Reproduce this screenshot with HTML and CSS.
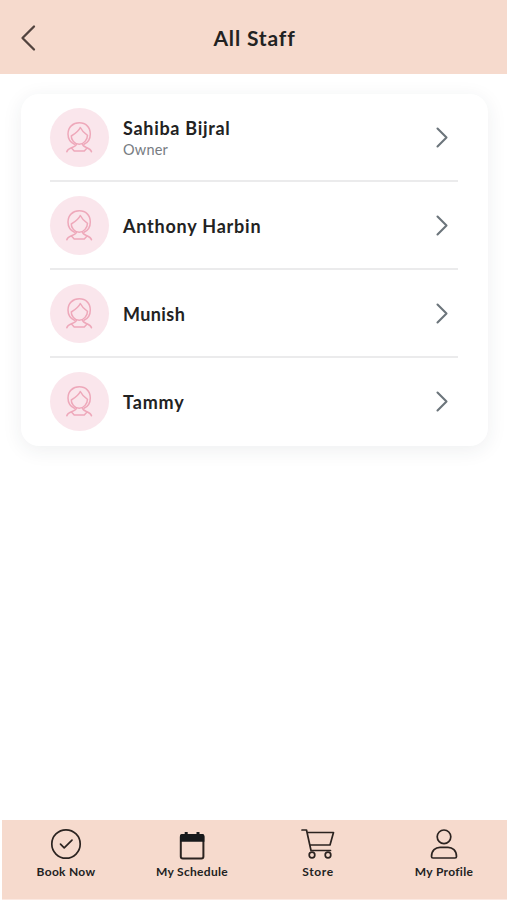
FILE: index.html
```html
<!DOCTYPE html>
<html lang="en">
<head>
<meta charset="utf-8">
<title>All Staff</title>
<link rel="stylesheet" href="styles.css">
</head>
<body>
<svg width="0" height="0" class="sprite" aria-hidden="true">
  <symbol id="person" viewBox="0 0 59 59">
    <path d="M24.500 36.300C20.500 34.500 18 31 18 26C18 19.300 22.800 14.800 29.300 14.800C35.800 14.800 40.300 19.300 40.300 26C40.300 31 38 34.500 34 36.300"/>
    <path d="M30.300 19.500C28.500 23.500 25.500 25.500 21.300 28C21 31.500 24.500 36.300 29.200 36.300C33.800 36.300 37.500 31.500 37.500 27.300C34.500 25.500 32 23 30.300 19.500Z"/>
    <path d="M26.500 36C26 38 24.500 38.600 21.500 39.800C18.500 41 17.300 41.800 16.800 43.800M32.300 36C32.800 38 34.300 38.600 37 39.800C39.800 41 41 41.800 41.500 43.800M21.500 40L24.200 43H34.300L37 40"/>
  </symbol>
  <symbol id="chevron" viewBox="0 0 14 22"><path d="M2.500 1.500L11.500 10.500L2.500 19.500"/></symbol>
</svg>
<header class="header">
  <svg class="back" viewBox="0 0 16 28"><path d="M14 2.500L2.500 14L14 25.500"/></svg>
  <h1>All Staff</h1>
</header>
<main>
  <ul class="card">
    <li class="row">
      <span class="avatar"><svg><use href="#person"/></svg></span>
      <div class="info"><div class="name sahiba">Sahiba Bijral</div><div class="role">Owner</div></div>
      <svg class="chevron"><use href="#chevron"/></svg>
    </li>
    <li class="row">
      <span class="avatar"><svg><use href="#person"/></svg></span>
      <div class="info"><div class="name anthony">Anthony Harbin</div></div>
      <svg class="chevron"><use href="#chevron"/></svg>
    </li>
    <li class="row">
      <span class="avatar"><svg><use href="#person"/></svg></span>
      <div class="info"><div class="name munish">Munish</div></div>
      <svg class="chevron"><use href="#chevron"/></svg>
    </li>
    <li class="row">
      <span class="avatar"><svg><use href="#person"/></svg></span>
      <div class="info"><div class="name tammy">Tammy</div></div>
      <svg class="chevron"><use href="#chevron"/></svg>
    </li>
  </ul>
</main>
<nav class="tabs">
  <a class="tab"><svg viewBox="0 0 36 34"><circle cx="18" cy="17" r="14.200"/><path d="M12.500 17.200L16.200 20.800L24 13.200"/></svg><span>Book Now</span></a>
  <a class="tab"><svg viewBox="0 0 36 34"><rect x="6.800" y="8" width="22.600" height="23.600" rx="2" stroke-width="2"/><path class="solid" d="M6 14.800V9Q6 7 8 7H10.700V5H13.700V7H22.500V5H25.500V7H28.400Q30.400 7 30.400 9V14.800Z"/></svg><span>My Schedule</span></a>
  <a class="tab"><svg viewBox="0 0 36 34"><path d="M2 3H6.500L11 23.500H30.500M7.300 5.500H33.500L30 18H10.300"/><circle cx="12" cy="28" r="2.800"/><circle cx="28" cy="28" r="2.800"/></svg><span class="store">Store</span></a>
  <a class="tab"><svg viewBox="0 0 36 34"><circle cx="18" cy="9.800" r="6.800"/><path d="M5.500 29.500C5.500 23.500 9.500 20.300 14 20.300H22C26.500 20.300 30.500 23.500 30.500 29.500Q30.500 31 29 31H7Q5.500 31 5.500 29.500Z"/></svg><span>My Profile</span></a>
</nav>
</body>
</html>
```
FILE: styles.css
```css
* { box-sizing: border-box; }
body {
  margin: 0;
  height: 900px;
  display: flex;
  flex-direction: column;
  overflow: hidden;
  background: #fff;
  color: #222;
  font-family: Lato, "Open Sans", sans-serif;
}
svg { fill: none; stroke-linecap: round; stroke-linejoin: round; }
.sprite { position: absolute; }
.header {
  height: 74px;
  flex: none;
  display: grid;
  grid-template-columns: 60px 1fr 60px;
  align-items: center;
  padding-top: 1px;
  background: #f6dacd;
}
.back {
  width: 16px;
  height: 28px;
  margin-left: 20px;
  stroke: #51433e;
  stroke-width: 2.3;
}
h1 {
  margin: 0 0 0 2px;
  text-align: center;
  font-size: 21px;
  line-height: 28px;
  letter-spacing: .85px;
}
main { flex: 1; padding: 20px 19px 0 21px; }
.card {
  margin: 0;
  padding: 0 30px 0 29px;
  list-style: none;
  border-radius: 18px;
  background: #fff;
  box-shadow: 0 4px 20px rgba(40, 45, 60, .08);
}
.row {
  height: 88px;
  display: flex;
  align-items: center;
  gap: 14px;
  padding-top: 1px;
  border-bottom: 2px solid #ebebec;
}
.row:last-child { border-bottom-color: transparent; }
.avatar {
  width: 59px;
  height: 59px;
  border-radius: 50%;
  background: #fae6ec;
}
.avatar svg {
  display: block;
  width: 59px;
  height: 59px;
  stroke: #eea8ba;
  stroke-width: 1.5;
}
.info { flex: 1; }
.name { font-size: 18px; line-height: 24px; font-weight: 700; }
.sahiba { letter-spacing: .7px; }
.anthony { letter-spacing: .78px; }
.munish { letter-spacing: .4px; }
.tammy { letter-spacing: .85px; }
.role { font-size: 14.500px; line-height: 20px; color: #777c82; letter-spacing: .2px; }
.chevron { width: 14px; height: 22px; margin-right: 9px; stroke: #6c757b; stroke-width: 2.1; }
.tabs {
  height: 80px;
  flex: none;
  display: grid;
  grid-template-columns: repeat(4, 1fr);
  margin-left: 2px;
  padding: 7px 0 0 1px;
  background: #f6dacd;
  border-bottom: 1px solid #fbe9e2;
}
.tab {
  display: flex;
  flex-direction: column;
  align-items: center;
  font-size: 12px;
  line-height: 16px;
  font-weight: 700;
  letter-spacing: .3px;
  white-space: nowrap;
}
.tab .store { letter-spacing: .6px; }
.tab svg { width: 36px; height: 34px; margin-bottom: 3px; stroke: #2b2320; stroke-width: 1.7; }
.tab .solid { fill: #17191b; stroke: none; }
```
